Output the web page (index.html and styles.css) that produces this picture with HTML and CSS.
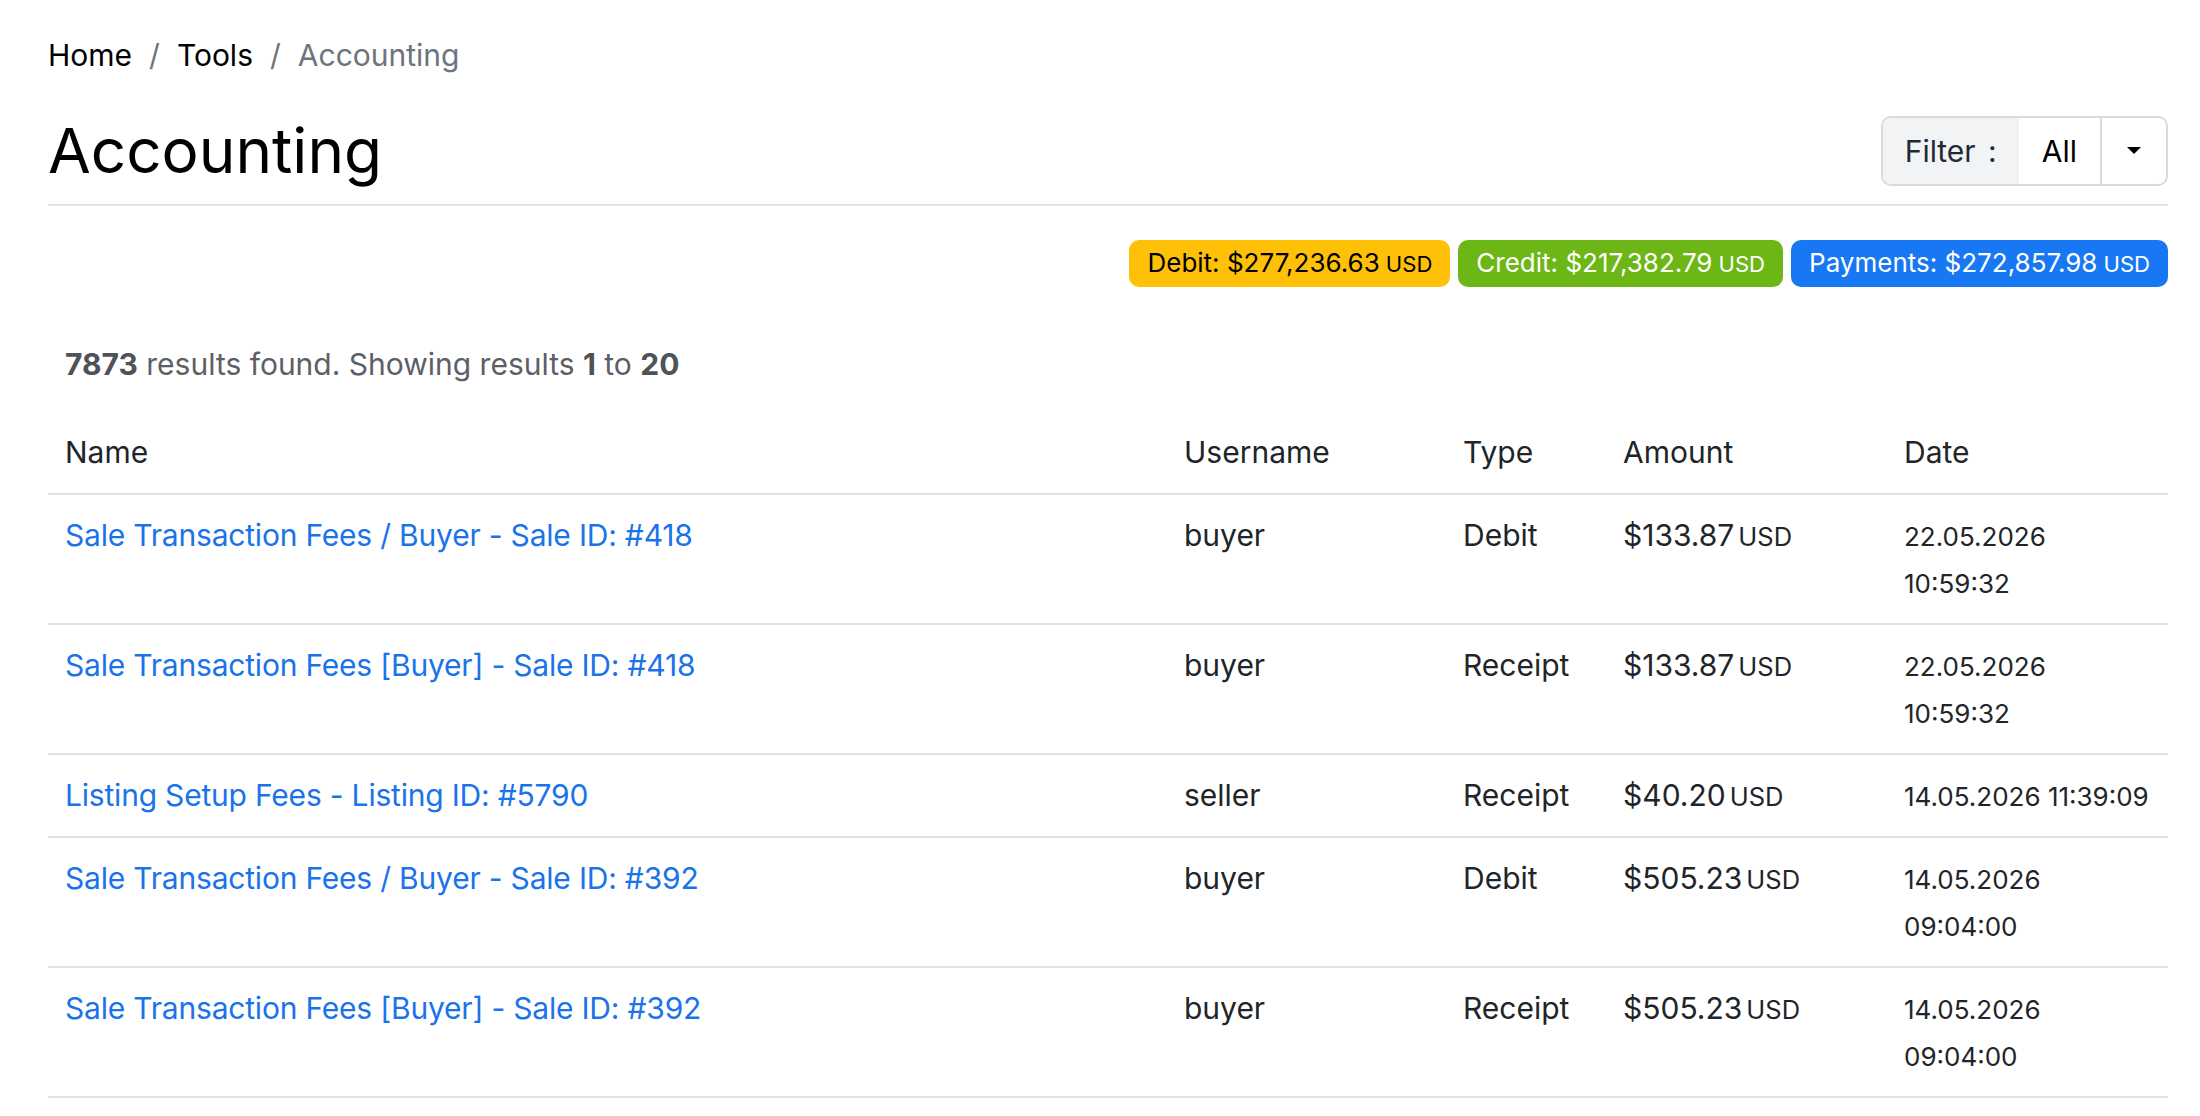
FILE: index.html
```html
<!DOCTYPE html>
<html lang="en">
<head>
    <meta charset="UTF-8">
    <meta name="viewport" content="width=device-width, initial-scale=1.0">
    <title>Accounting</title>
    <link rel="stylesheet" href="styles.css">
</head>
<body>
    <div class="page">
        <ol class="breadcrumb">
            <li><a href="#">Home</a></li>
            <li><a href="#">Tools</a></li>
            <li class="current">Accounting</li>
        </ol>

        <div class="title-bar">
            <h1>Accounting</h1>
            <div class="filter">
                <span class="filter-label">Filter <span class="colon">:</span></span>
                <span class="filter-value">All</span>
                <button class="filter-toggle" type="button"><span class="caret"></span></button>
            </div>
        </div>

        <div class="totals">
            <span class="badge debit">Debit: $277,236.63<small>USD</small></span>
            <span class="badge credit">Credit: $217,382.79<small>USD</small></span>
            <span class="badge payments">Payments: $272,857.98<small>USD</small></span>
        </div>

        <p class="results"><b>7873</b> results found. Showing results <b>1</b> to <b>20</b></p>

        <table class="list">
            <thead>
                <tr>
                    <th class="col-name">Name</th>
                    <th class="col-user">Username</th>
                    <th class="col-type">Type</th>
                    <th class="col-amount">Amount</th>
                    <th class="col-date">Date</th>
                </tr>
            </thead>
            <tbody>
                <tr>
                    <td><a href="#">Sale Transaction Fees / Buyer - Sale ID: #418</a></td>
                    <td>buyer</td>
                    <td>Debit</td>
                    <td>$133.87<small class="cur">USD</small></td>
                    <td><small>22.05.2026<br>10:59:32</small></td>
                </tr>
                <tr>
                    <td><a href="#">Sale Transaction Fees [Buyer] - Sale ID: #418</a></td>
                    <td>buyer</td>
                    <td>Receipt</td>
                    <td>$133.87<small class="cur">USD</small></td>
                    <td><small>22.05.2026<br>10:59:32</small></td>
                </tr>
                <tr>
                    <td><a href="#">Listing Setup Fees - Listing ID: #5790</a></td>
                    <td>seller</td>
                    <td>Receipt</td>
                    <td>$40.20<small class="cur">USD</small></td>
                    <td><small>14.05.2026 11:39:09</small></td>
                </tr>
                <tr>
                    <td><a href="#">Sale Transaction Fees / Buyer - Sale ID: #392</a></td>
                    <td>buyer</td>
                    <td>Debit</td>
                    <td>$505.23<small class="cur">USD</small></td>
                    <td><small>14.05.2026<br>09:04:00</small></td>
                </tr>
                <tr>
                    <td><a href="#">Sale Transaction Fees [Buyer] - Sale ID: #392</a></td>
                    <td>buyer</td>
                    <td>Receipt</td>
                    <td>$505.23<small class="cur">USD</small></td>
                    <td><small>14.05.2026<br>09:04:00</small></td>
                </tr>
            </tbody>
        </table>
    </div>
</body>
</html>
```

FILE: styles.css
```css
* {
    margin: 0;
    padding: 0;
    box-sizing: border-box;
}

body {
    font-family: Inter, "Liberation Sans", sans-serif;
    font-size: 30px;
    line-height: 47px;
    color: #212529;
    background: #fff;
}

a {
    color: #1a73e8;
    text-decoration: none;
}

.page {
    padding: 33px 32px 0 48px;
}

/* breadcrumb */
.breadcrumb {
    display: flex;
    list-style: none;
    line-height: 45px;
}

.breadcrumb a {
    color: #000;
}

.breadcrumb li + li::before {
    content: "/";
    padding: 0 17px;
    color: #6c757d;
}

.breadcrumb .current {
    color: #6c757d;
}

/* title + filter */
.title-bar {
    display: flex;
    align-items: center;
    justify-content: space-between;
    margin-top: 35px;
    padding-bottom: 16px;
    border-bottom: 2px solid #e4e4e4;
}

.title-bar h1 {
    font-size: 62px;
    font-weight: 400;
    line-height: 75px;
    color: #000;
}

.filter {
    display: flex;
    border: 2px solid #d7dade;
    border-radius: 10px;
    overflow: hidden;
    line-height: 46px;
}

.filter-label {
    padding: 10px 22px;
    background: #f2f3f5;
    color: #1f2937;
}

.filter-label .colon {
    margin-left: 4px;
}

.filter-value {
    padding: 10px 23px;
    color: #000;
}

.filter-toggle {
    display: flex;
    align-items: center;
    justify-content: center;
    width: 66px;
    border: 0;
    border-left: 2px solid #d7dade;
    background: #fff;
}

.caret {
    width: 0;
    height: 0;
    border-top: 7px solid #000;
    border-left: 7px solid transparent;
    border-right: 7px solid transparent;
}

/* totals */
.totals {
    display: flex;
    justify-content: flex-end;
    gap: 8px;
    margin-top: 34px;
}

.badge {
    padding: 0 18px;
    font-size: 26px;
    line-height: 45px;
    border-radius: 10px;
    color: #fff;
}

.badge small {
    margin-left: 6px;
    font-size: 0.85em;
}

.debit {
    background: #ffc107;
    color: #000;
}

.credit {
    background: #6cb716;
}

.payments {
    background: #1877f2;
}

/* results */
.results {
    margin: 54px 0 24px;
    padding: 0 17px;
    color: #5c6066;
}

.results b {
    color: #4f5358;
}

/* table */
.list {
    width: 100%;
    border-collapse: collapse;
    table-layout: fixed;
}

.list th,
.list td {
    padding: 17px;
    text-align: left;
    vertical-align: top;
    font-weight: 400;
    border-bottom: 2px solid #dee2e6;
}

.list td a {
    letter-spacing: -0.2px;
}

.list td small {
    font-size: 26px;
    line-height: 1;
}

.list td .cur {
    margin-left: 4px;
    font-size: 0.85em;
}

.col-name { width: 1119px; }
.col-user { width: 279px; }
.col-type { width: 160px; }
.col-amount { width: 281px; }
.col-date { width: 281px; }
```
